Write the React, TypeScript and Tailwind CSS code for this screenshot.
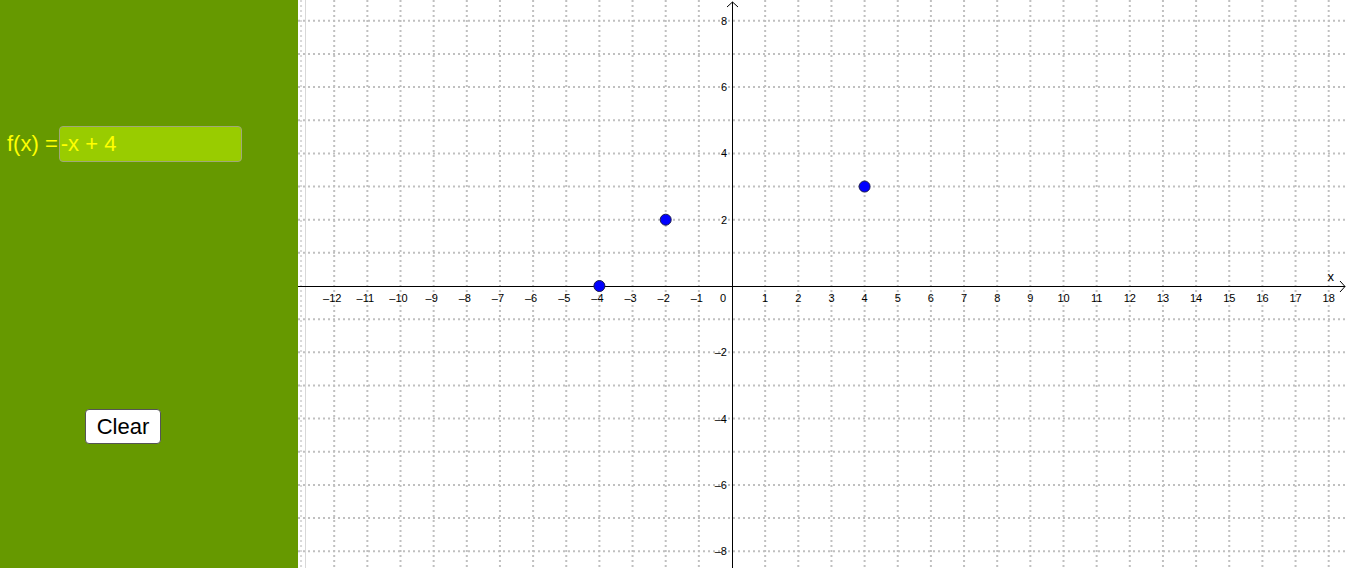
import React from 'react';

const OX = 434;
const OY = 286;
const U = 33.15;
const W = 1049;
const H = 568;

const px = (x: number) => OX + x * U;
const py = (y: number) => OY - y * U;

const points: [number, number][] = [
  [-4, 0],
  [-2, 2],
  [4, 3],
];

function minus(n: number) {
  return n < 0 ? `\u2013${Math.abs(n)}` : `${n}`;
}

function Graph() {
  const xs: number[] = [];
  for (let i = -13; i <= 18; i++) xs.push(i);
  const ys: number[] = [];
  for (let i = -8; i <= 8; i++) ys.push(i);

  return (
    <svg width={W} height={H} className="block" style={{ fontFamily: '"Liberation Sans", Arial, sans-serif' }}>
      {/* grid */}
      {xs.map((x) =>
        x === 0 ? null : (
          <line key={'gx' + x} x1={px(x)} y1={0} x2={px(x)} y2={H} stroke={x === -13 ? '#d8d8d8' : '#c0c0c0'} strokeWidth={2} strokeDasharray="2 3" />
        )
      )}
      {ys.map((y) =>
        y === 0 ? null : (
          <line key={'gy' + y} x1={0} y1={py(y)} x2={W} y2={py(y)} stroke="#c0c0c0" strokeWidth={2} strokeDasharray="2 3" />
        )
      )}
      <line x1={7.5} y1={0} x2={7.5} y2={H} stroke="#d8d8d8" strokeWidth={1} />

      {/* axes */}
      <line x1={0} y1={OY + 0.5} x2={W - 2} y2={OY + 0.5} stroke="#000" strokeWidth={1} />
      <polyline points={`${W - 7},${OY - 5} ${W - 2},${OY + 0.5} ${W - 7},${OY + 6}`} fill="none" stroke="#000" strokeWidth={1} />
      <line x1={OX + 0.5} y1={2} x2={OX + 0.5} y2={H} stroke="#000" strokeWidth={1} />
      <polyline points={`${OX - 5},${7} ${OX + 0.5},${2} ${OX + 6},${7}`} fill="none" stroke="#000" strokeWidth={1} />

      {/* x labels */}
      {xs.map((x) =>
        x < -12 ? null : x === 0 ? (
          <text key={'lx' + x} x={px(0) - 9} y={OY + 16} fontSize={11} textAnchor="middle" fill="#000">
            0
          </text>
        ) : (
          <text key={'lx' + x} x={px(x) + (x < 0 ? -2 : 0)} y={OY + 16} fontSize={11} textAnchor="middle" fill="#000">
            {minus(x)}
          </text>
        )
      )}
      <text x={px(18) + 2} y={OY - 5} fontSize={13} textAnchor="middle" fill="#000">
        x
      </text>

      {/* y labels */}
      {ys.map((y) =>
        y === 0 || y % 2 !== 0 ? null : (
          <text key={'ly' + y} x={OX - 5} y={py(y) + 4} fontSize={11} textAnchor="end" fill="#000">
            {minus(y)}
          </text>
        )
      )}

      {/* points */}
      {points.map(([x, y]) => (
        <circle key={`${x},${y}`} cx={px(x)} cy={py(y)} r={5.5} fill="#0000ff" stroke="#1a1a4d" strokeWidth={1} />
      ))}
    </svg>
  );
}

export default function App() {
  return (
    <div className="flex w-[1347px] h-[568px] overflow-hidden bg-white" style={{ fontFamily: '"Liberation Sans", Arial, sans-serif' }}>
      <div className="w-[298px] shrink-0 bg-[#669900] flex flex-col">
        <div className="flex items-center pl-[7px] mt-[126px] h-[36px]">
          <span className="text-[22px] text-[#ffff00] leading-none">f(x) =</span>
          <div className="ml-[1px] w-[183px] h-[36px] rounded-[4px] border border-[#a0a878] bg-[#99cc00] flex items-center">
            <span className="text-[22px] text-[#ffff00] leading-none pl-[1px]">-x + 4</span>
          </div>
        </div>
        <div className="mt-[247px] pl-[85px]">
          <button className="w-[76px] h-[35px] bg-white border border-[#555] rounded-[4px] text-[22px] text-black leading-none">
            Clear
          </button>
        </div>
      </div>
      <div className="flex-1">
        <Graph />
      </div>
    </div>
  );
}
